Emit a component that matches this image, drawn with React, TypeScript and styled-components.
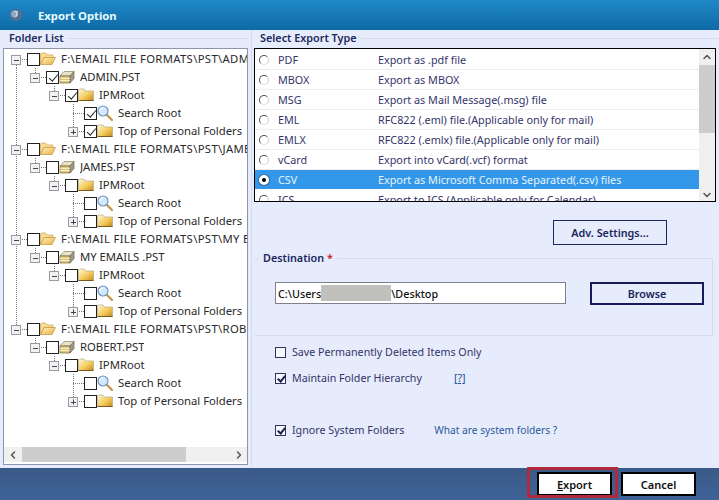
import React from "react";
import styled, { createGlobalStyle } from "styled-components";
import { ChevronUp, ChevronDown, ChevronLeft, ChevronRight } from "lucide-react";

const FONT = `"Noto Sans", "Open Sans", Arial, sans-serif`;

const folders = [
    { path: "F:\\EMAIL FILE FORMATS\\PST\\ADMIN.PST", pst: "ADMIN.PST", checked: true },
    { path: "F:\\EMAIL FILE FORMATS\\PST\\JAMES.PST", pst: "JAMES.PST", checked: false },
    { path: "F:\\EMAIL FILE FORMATS\\PST\\MY EMAILS .PST", pst: "MY EMAILS .PST", checked: false },
    { path: "F:\\EMAIL FILE FORMATS\\PST\\ROBERT.PST", pst: "ROBERT.PST", checked: false }
];

const exportTypes = [
    { name: "PDF", text: "Export as .pdf file" },
    { name: "MBOX", text: "Export as MBOX" },
    { name: "MSG", text: "Export as Mail Message(.msg) file" },
    { name: "EML", text: "RFC822 (.eml) file.(Applicable only for mail)" },
    { name: "EMLX", text: "RFC822 (.emlx) file.(Applicable only for mail)" },
    { name: "vCard", text: "Export into vCard(.vcf) format" },
    { name: "CSV", text: "Export as Microsoft Comma Separated(.csv) files", selected: true },
    { name: "ICS", text: "Export to ICS (Applicable only for Calendar)" }
];

type Expander = "minus" | "plus" | "none";

// dotted lines and the +/- box in front of a tree row
const TreeGuides = ({ level, expander, rootLine, tall }: {
    level: number;
    expander: Expander;
    rootLine: "full" | "top" | "bottom" | "none";
    tall?: boolean;
}) => {
    const width = 23 + 19 * level;
    const cx = 12 + 19 * level;
    const dotted = { stroke: "#777", strokeWidth: 1, strokeDasharray: "1 1", fill: "none" };
    return (
        <svg width={width} height={18} style={{ flex: "none", display: "block" }}>
            {rootLine === "full" && <path d="M12.5 0V18" {...dotted} />}
            {rootLine === "top" && <path d="M12.5 0V9" {...dotted} />}
            {rootLine === "bottom" && <path d="M12.5 9V18" {...dotted} />}
            {level > 0 && <path d={`M${cx + 0.5} 0V${tall ? 18 : 9}`} {...dotted} />}
            <path d={`M${cx} 9.5H${width}`} {...dotted} />
            {expander !== "none" && (
                <g>
                    <rect x={cx - 4.5} y={5.5} width={9} height={9} fill="#f1f1f1" stroke="#9a9aa6" />
                    <path d={`M${cx - 2} 10.5H${cx + 3}`} stroke="#444" fill="none" />
                    {expander === "plus" && <path d={`M${cx + 0.5} 7.5V12.5`} stroke="#444" fill="none" />}
                </g>
            )}
        </svg>
    );
};

const OpenFolderIcon = () => (
    <svg width="16" height="14" viewBox="0 0 16 14" style={{ flex: "none" }}>
        <defs>
            <linearGradient id="openFolder" x1="0" y1="0" x2="1" y2="1">
                <stop offset="0" stopColor="#fff2c0" />
                <stop offset="1" stopColor="#e8b040" />
            </linearGradient>
        </defs>
        <path d="M0.5 12.5V2L1.5 1H5.5L7 3H13V5.5H4L0.5 12.5Z" fill="#f9dc90" stroke="#c9a050" strokeWidth="0.7" />
        <path d="M0.5 12.5L4 5.5H15.5L12 12.5Z" fill="url(#openFolder)" stroke="#c39238" strokeWidth="0.7" />
    </svg>
);

const ClosedFolderIcon = () => (
    <svg width="16" height="14" viewBox="0 0 16 14" style={{ flex: "none" }}>
        <defs>
            <linearGradient id="closedFolder" x1="0" y1="0" x2="1" y2="1">
                <stop offset="0" stopColor="#fff8dc" />
                <stop offset="0.55" stopColor="#f4cc5c" />
                <stop offset="1" stopColor="#c48a20" />
            </linearGradient>
        </defs>
        <path d="M0.5 12.5V2L1.5 1H6L7.5 3H15.5V12.5Z" fill="url(#closedFolder)" stroke="#b9a98a" strokeWidth="0.7" />
        <path d="M0.5 12.5H15.5" stroke="#7a5a20" strokeWidth="1" />
    </svg>
);

const PstIcon = () => (
    <svg width="16" height="14" viewBox="0 0 16 14" style={{ flex: "none" }}>
        <path d="M1 6L5 1.5H15L11 6Z" fill="#e8e2c8" stroke="#8b8468" strokeWidth="0.7" />
        <path d="M1 6H11V13H1Z" fill="#e2c46e" stroke="#6f6444" strokeWidth="0.7" />
        <path d="M11 6L15 1.5V8.5L11 13Z" fill="#9c9a8c" stroke="#6f6444" strokeWidth="0.7" />
        <path d="M1 8.3H11M1 10.6H11" stroke="#fff" strokeWidth="0.8" />
    </svg>
);

const SearchIcon = () => (
    <svg width="16" height="16" viewBox="0 0 16 16" style={{ flex: "none" }}>
        <path d="M9.5 9.5L15 15" stroke="#c79650" strokeWidth="2.4" strokeLinecap="round" />
        <circle cx="6" cy="6" r="5" fill="#d5e8fb" stroke="#6f96c4" strokeWidth="1.2" />
        <path d="M3 6A3 3 0 0 1 6 3" stroke="#fff" strokeWidth="1.2" fill="none" />
    </svg>
);

const TitleIcon = () => (
    <svg width="16" height="14" viewBox="0 0 16 14">
        <ellipse cx="8" cy="7" rx="6.5" ry="6" fill="#4f6f94" />
        <ellipse cx="6.5" cy="6" rx="3.5" ry="3.5" fill="#8ea6c2" />
        <path d="M6 3.5H9V6.5L7.5 9" stroke="#d8e2ee" strokeWidth="1.2" fill="none" />
    </svg>
);

const App = () => {
    return (
        <Page>
            <GlobalStyle />
            <TitleBar>
                <TitleIcon />
                <Title>Export Option</Title>
            </TitleBar>
            <Body>
                <LeftPanel>
                    <GroupTitle>Folder List</GroupTitle>
                    <TreeBox>
                        <TreeRows>
                            {folders.map((folder, i) => {
                                const last = i === folders.length - 1;
                                const through = last ? "none" : "full";
                                return (
                                    <React.Fragment key={folder.path}>
                                        <TreeRow>
                                            <TreeGuides
                                                level={0}
                                                expander="minus"
                                                rootLine={i === 0 ? "bottom" : last ? "top" : "full"}
                                            />
                                            <TreeCheck />
                                            <OpenFolderIcon />
                                            <TreeText $wide>{folder.path}</TreeText>
                                        </TreeRow>
                                        <TreeRow>
                                            <TreeGuides level={1} expander="minus" rootLine={through} />
                                            <TreeCheck $checked={folder.checked} />
                                            <PstIcon />
                                            <TreeText>{folder.pst}</TreeText>
                                        </TreeRow>
                                        <TreeRow>
                                            <TreeGuides level={2} expander="minus" rootLine={through} />
                                            <TreeCheck $checked={folder.checked} />
                                            <ClosedFolderIcon />
                                            <TreeText>IPMRoot</TreeText>
                                        </TreeRow>
                                        <TreeRow>
                                            <TreeGuides level={3} expander="none" rootLine={through} tall />
                                            <TreeCheck $checked={folder.checked} />
                                            <SearchIcon />
                                            <TreeText>Search Root</TreeText>
                                        </TreeRow>
                                        <TreeRow>
                                            <TreeGuides level={3} expander="plus" rootLine={through} />
                                            <TreeCheck $checked={folder.checked} />
                                            <ClosedFolderIcon />
                                            <TreeText>Top of Personal Folders</TreeText>
                                        </TreeRow>
                                    </React.Fragment>
                                );
                            })}
                        </TreeRows>
                        <HScroll>
                            <ChevronLeft size={12} strokeWidth={3} color="#555" />
                            <HTrack>
                                <HThumb />
                            </HTrack>
                            <ChevronRight size={12} strokeWidth={3} color="#555" />
                        </HScroll>
                    </TreeBox>
                </LeftPanel>
                <RightPanel>
                    <GroupTitle>Select Export Type</GroupTitle>
                    <TypeBox>
                        <TypeList>
                            {exportTypes.map((type) => (
                                <TypeRow key={type.name} $selected={type.selected}>
                                    <Radio $selected={type.selected} />
                                    <TypeName>{type.name}</TypeName>
                                    <span>{type.text}</span>
                                </TypeRow>
                            ))}
                        </TypeList>
                        <VScroll>
                            <ChevronUp size={12} strokeWidth={3} color="#555" />
                            <VTrack>
                                <VThumb />
                            </VTrack>
                            <ChevronDown size={12} strokeWidth={3} color="#555" />
                        </VScroll>
                    </TypeBox>
                    <AdvRow>
                        <AdvButton type="button">Adv. Settings...</AdvButton>
                    </AdvRow>
                    <Destination>
                        <DestLegend>
                            Destination <Star>*</Star>
                        </DestLegend>
                        <DestRow>
                            <PathBox>
                                C:\Users<Redacted />\Desktop
                            </PathBox>
                            <BrowseButton type="button">Browse</BrowseButton>
                        </DestRow>
                    </Destination>
                    <Options>
                        <OptionRow $mb={14}>
                            <OptionCheck />
                            <span>Save Permanently Deleted Items Only</span>
                        </OptionRow>
                        <OptionRow $mb={40}>
                            <OptionCheck $checked />
                            <span>Maintain Folder Hierarchy</span>
                            <HelpLink href="#">[?]</HelpLink>
                        </OptionRow>
                        <OptionRow>
                            <OptionCheck $checked />
                            <span>Ignore System Folders</span>
                            <SystemLink>What are system folders ?</SystemLink>
                        </OptionRow>
                    </Options>
                </RightPanel>
            </Body>
            <Footer>
                <ExportButton type="button">
                    <u>E</u>xport
                </ExportButton>
                <CancelButton type="button">Cancel</CancelButton>
            </Footer>
        </Page>
    );
};

export default App;

const GlobalStyle = createGlobalStyle`
  html, body {
    margin: 0;
    padding: 0;
  }
  body {
    font-family: ${FONT};
    font-size: 11px;
    background: #e6ecfb;
  }
`;

const Page = styled.div`
  width: 719px;
  height: 500px;
  display: flex;
  flex-direction: column;
  overflow: hidden;
  background: #e6ecfb;
`;

const TitleBar = styled.div`
  height: 30px;
  flex: none;
  display: flex;
  align-items: center;
  padding-left: 8px;
  background: linear-gradient(#2089c8, #0e6aa6);
`;

const Title = styled.div`
  margin-left: 14px;
  font-size: 11.3px;
  font-weight: 700;
  color: #e4fbff;
`;

const Body = styled.div`
  flex: 1;
  min-height: 0;
  display: flex;
`;

const LeftPanel = styled.div`
  width: 248px;
  flex: none;
  box-sizing: border-box;
  padding-left: 3px;
  display: flex;
  flex-direction: column;
`;

const RightPanel = styled.div`
  flex: 1;
  min-width: 0;
  display: flex;
  flex-direction: column;
  margin-left: 3px;
  padding-left: 2px;
  border-left: 1px solid #d6dcea;
`;

const GroupTitle = styled.div`
  height: 18px;
  line-height: 15px;
  padding: 0 0 0 6px;
  display: flex;
  font-size: 10.8px;
  font-weight: 600;
  color: #20285e;

  &::after {
    content: "";
    flex: 1;
    height: 1px;
    margin: 8px 0 0 4px;
    background: #d6dcea;
  }
`;

const TreeBox = styled.div`
  width: 245px;
  height: 417px;
  box-sizing: border-box;
  background: #fff;
  border: 1px solid #8d96a8;
  display: flex;
  flex-direction: column;
`;

const TreeRows = styled.div`
  flex: 1;
  min-height: 0;
  overflow: hidden;
  padding-top: 1px;
`;

const TreeRow = styled.div`
  height: 18px;
  display: flex;
  align-items: center;
  white-space: nowrap;
  overflow: hidden;
`;

const TreeCheck = styled.span<{ $checked?: boolean }>`
  width: 13px;
  height: 13px;
  flex: none;
  box-sizing: border-box;
  border: 1px solid #222;
  background: #fff;
  position: relative;

  ${(p) =>
      p.$checked &&
      `
    &::after {
      content: "";
      position: absolute;
      left: 3.5px;
      top: 0.5px;
      width: 3.5px;
      height: 8px;
      border: solid #222;
      border-width: 0 1.3px 1.3px 0;
      transform: rotate(40deg);
    }
  `}
`;

const TreeText = styled.span<{ $wide?: boolean }>`
  margin-left: 5px;
  padding-bottom: 1px;
  min-width: 0;
  overflow: hidden;
  font-size: 11.3px;
  letter-spacing: ${(p) => (p.$wide ? "0.33px" : "0")};
  color: #2a2a2a;
`;

const HScroll = styled.div`
  height: 15px;
  margin-bottom: 2px;
  flex: none;
  display: flex;
  align-items: center;
  padding: 0 2px 0 3px;
  background: #f0f0f0;
`;

const HTrack = styled.div`
  flex: 1;
  height: 100%;
  padding: 0 0 0 3px;
`;

const HThumb = styled.div`
  width: 164px;
  height: 100%;
  background: #cdcdcd;
`;

const TypeBox = styled.div`
  height: 154px;
  width: 462px;
  box-sizing: border-box;
  border: 1px solid #000;
  background: #fff;
  display: flex;
`;

const TypeList = styled.div`
  flex: 1;
  min-width: 0;
  overflow: hidden;
  padding-top: 1px;
`;

const TypeRow = styled.div<{ $selected?: boolean }>`
  height: 20px;
  box-sizing: border-box;
  display: flex;
  align-items: center;
  padding-left: 4px;
  font-size: 10.8px;
  white-space: nowrap;
  color: ${(p) => (p.$selected ? "#e8f4ff" : "#34346a")};
  background: ${(p) => (p.$selected ? "#3398e9" : "#fff")};
  border-bottom: 1px solid ${(p) => (p.$selected ? "#fff" : "#ececec")};
`;

const Radio = styled.span<{ $selected?: boolean }>`
  width: 10px;
  height: 10px;
  flex: none;
  box-sizing: border-box;
  border-radius: 50%;
  border: ${(p) => (p.$selected ? "3px solid #fff" : "1.5px solid")};
  border-color: ${(p) => (p.$selected ? "#fff" : "#555 #ccc #ddd #555")};
  background: ${(p) => (p.$selected ? "#000" : "#fff")};
  box-shadow: ${(p) => (p.$selected ? "0 0 0 1px #3a6a98" : "none")};
`;

const TypeName = styled.span`
  width: 100px;
  margin-left: 9px;
  flex: none;
`;

const VScroll = styled.div`
  width: 16px;
  flex: none;
  display: flex;
  flex-direction: column;
  align-items: center;
  padding-top: 2px;
  background: #f0f0f0;
`;

const VTrack = styled.div`
  width: 100%;
  flex: 1;
  padding-top: 2px;
`;

const VThumb = styled.div`
  height: 68px;
  background: #cdcdcd;
`;

const AdvRow = styled.div`
  height: 56px;
  flex: none;
  display: flex;
  justify-content: flex-end;
  align-items: flex-start;
  padding: 18px 52px 0 0;
  box-sizing: border-box;
`;

const AdvButton = styled.button`
  width: 114px;
  height: 25px;
  padding: 0;
  box-sizing: border-box;
  background: #e6ecfb;
  border: 1px solid #1b2560;
  font-family: ${FONT};
  font-size: 10.8px;
  font-weight: 600;
  color: #1b2560;
`;

const Destination = styled.div`
  width: 459px;
  height: 78px;
  box-sizing: border-box;
  border: 1px solid #d6dcea;
  border-left-color: transparent;
  padding: 23px 8px 0 20px;
  position: relative;
`;

const DestLegend = styled.div`
  position: absolute;
  left: 4px;
  top: -9px;
  padding: 0 4px;
  background: #e6ecfb;
  font-size: 10.8px;
  font-weight: 600;
  color: #20285e;
`;

const Star = styled.span`
  color: #c8202c;
`;

const DestRow = styled.div`
  display: flex;
  align-items: flex-start;
  justify-content: space-between;
`;

const PathBox = styled.div`
  width: 291px;
  height: 22px;
  box-sizing: border-box;
  display: flex;
  align-items: center;
  padding-left: 2px;
  background: #fff;
  border: 1px solid #80808c;
  font-size: 10.8px;
  font-weight: 500;
  color: #111;
`;

const Redacted = styled.span`
  width: 70px;
  height: 16px;
  flex: none;
  background: #c0c0bc;
`;

const BrowseButton = styled.button`
  width: 114px;
  height: 23px;
  padding: 0;
  box-sizing: border-box;
  background: #e6ecfb;
  border: 2px solid #141d5a;
  font-family: ${FONT};
  font-size: 10.8px;
  font-weight: 600;
  color: #1b2560;
`;

const Options = styled.div`
  padding: 10px 0 0 21px;
  display: flex;
  flex-direction: column;
`;

const OptionRow = styled.div<{ $mb?: number }>`
  height: 12px;
  display: flex;
  align-items: center;
  margin-bottom: ${(p) => p.$mb || 0}px;
  font-size: 10.7px;
  color: #34346a;
  white-space: nowrap;
`;

const OptionCheck = styled.span<{ $checked?: boolean }>`
  width: 11px;
  height: 11px;
  flex: none;
  margin-right: 6px;
  box-sizing: border-box;
  border: 1px solid #33335a;
  background: #f4f7fe;
  position: relative;

  ${(p) =>
      p.$checked &&
      `
    &::after {
      content: "";
      position: absolute;
      left: 2.5px;
      top: 0;
      width: 3px;
      height: 6px;
      border: solid #1a2050;
      border-width: 0 2px 2px 0;
      transform: rotate(40deg);
    }
  `}
`;

const HelpLink = styled.a`
  margin-left: 32px;
  color: #1f4f9c;
  text-decoration: underline;
`;

const SystemLink = styled.span`
  margin-left: 30px;
  font-size: 10.2px;
  color: #2a5a9c;
`;

const Footer = styled.div`
  height: 32px;
  box-sizing: border-box;
  flex: none;
  display: flex;
  justify-content: flex-end;
  align-items: flex-start;
  gap: 9px;
  padding: 4px 23px 0 0;
  background: linear-gradient(#3a5a87, #3f6398);
`;

const FooterButton = styled.button`
  width: 75px;
  height: 24px;
  padding: 0;
  box-sizing: border-box;
  background: #fff;
  border: 2px solid #000;
  font-family: ${FONT};
  font-size: 11px;
  font-weight: 600;
  color: #111;
`;

const ExportButton = styled(FooterButton)`
  position: relative;

  &::after {
    content: "";
    position: absolute;
    left: -12px;
    right: -8px;
    top: -7px;
    bottom: -4px;
    border: 3px solid #b02a3c;
    pointer-events: none;
  }
`;

const CancelButton = styled(FooterButton)``;
